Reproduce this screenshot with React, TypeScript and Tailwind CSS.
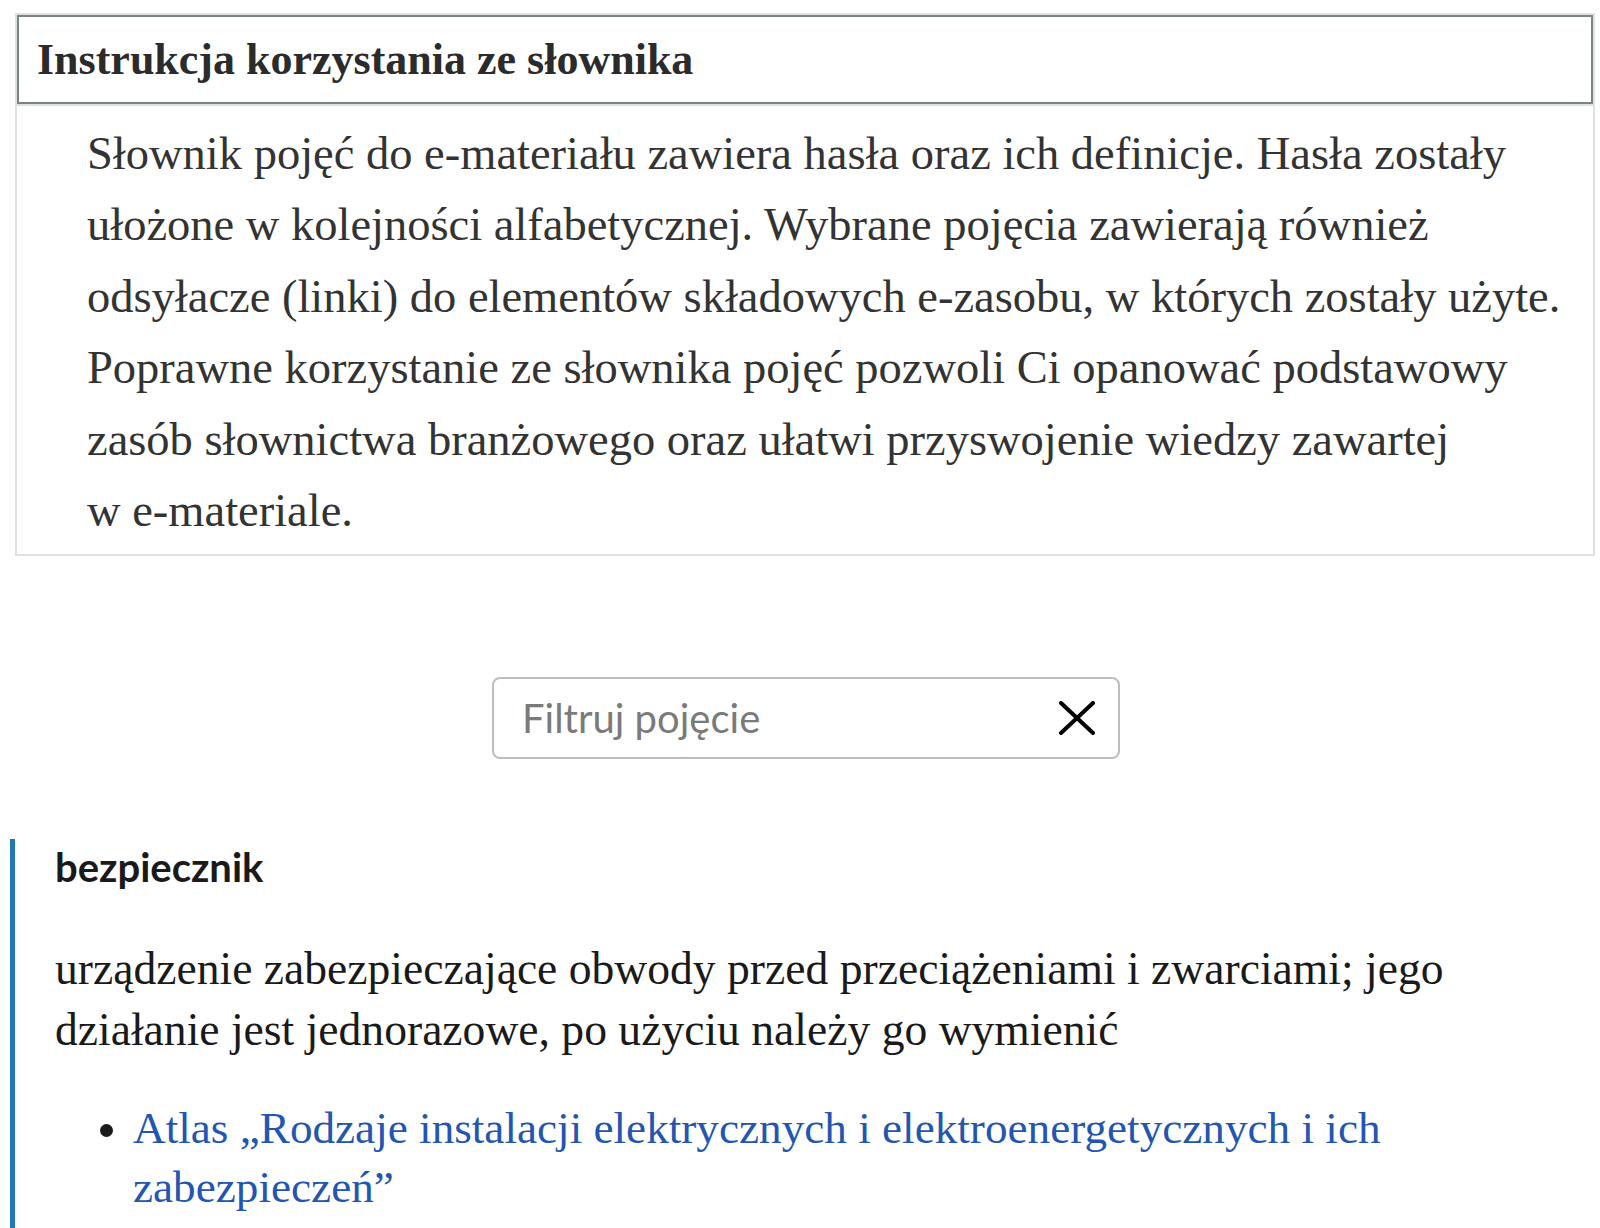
import { useState } from "react";

export default function App() {
  const [query, setQuery] = useState("");

  return (
    <div className="min-h-screen bg-white pt-[13px]">
      {/* INSTRUKCJA */}
      <section className="ml-[15px] w-[1580px] border-2 border-[#dde1e1]">
        <div className="border-b-2 border-[#dde1e1]">
          <h2 className="h-[89px] border-2 border-[#7b8383] pl-[18px] flex items-center font-['Liberation_Serif',serif] font-bold text-[44px] text-[#2b2b2b]">
            Instrukcja korzystania ze słownika
          </h2>
        </div>
        <p className="pl-[70px] pt-[12px] pb-[8px] font-['Liberation_Serif',serif] text-[46.5px] leading-[71.4px] text-[#333333]">
          Słownik pojęć do e-materiału zawiera hasła oraz ich definicje. Hasła zostały
          <br />
          ułożone w kolejności alfabetycznej. Wybrane pojęcia zawierają również
          <br />
          odsyłacze (linki) do elementów składowych e-zasobu, w których zostały użyte.
          <br />
          Poprawne korzystanie ze słownika pojęć pozwoli Ci opanować podstawowy
          <br />
          zasób słownictwa branżowego oraz ułatwi przyswojenie wiedzy zawartej
          <br />w e-materiale.
        </p>
      </section>

      {/* FILTR */}
      <div className="mt-[121px] flex justify-center pl-[12px]">
        <div className="w-[628px] h-[82px] border-2 border-[#bdbdbd] rounded-[8px] flex items-center pl-[28px] pr-[22px]">
          <input
            value={query}
            onChange={(e) => setQuery(e.target.value)}
            placeholder="Filtruj pojęcie"
            className="flex-1 min-w-0 outline-none bg-transparent font-['Lato',sans-serif] text-[40px] text-[#222] placeholder:text-[#7a7a7a]"
          />
          <button onClick={() => setQuery("")} className="w-[38px] h-[38px] flex items-center justify-center">
            <svg width="36" height="34" viewBox="0 0 36 34">
              <path d="M2 2L34 32M34 2L2 32" stroke="#000" strokeWidth="4" strokeLinecap="round" fill="none" />
            </svg>
          </button>
        </div>
      </div>

      {/* HASLO */}
      <article className="mt-[80px] ml-[10px] border-l-[5px] border-[#1f78b4] pl-[40px] pt-[3px] pb-[20px]">
        <h3 className="font-['Lato',sans-serif] font-bold text-[40px] leading-[50px] text-[#1a1a1a]">
          bezpiecznik
        </h3>
        <p className="mt-[46px] font-['Liberation_Serif',serif] text-[45.6px] leading-[61px] text-[#1a1a1a]">
          urządzenie zabezpieczające obwody przed przeciążeniami i zwarciami; jego
          <br />
          działanie jest jednorazowe, po użyciu należy go wymienić
        </p>
        <ul className="mt-[39px] pl-[78px] list-disc marker:text-[#1a1a1a] font-['Liberation_Serif',serif] text-[45.2px] leading-[59px]">
          <li>
            <a href="#" className="text-[#2356b0]">
              Atlas „Rodzaje instalacji elektrycznych i elektroenergetycznych i ich
              <br />
              zabezpieczeń”
            </a>
          </li>
        </ul>
      </article>
    </div>
  );
}
